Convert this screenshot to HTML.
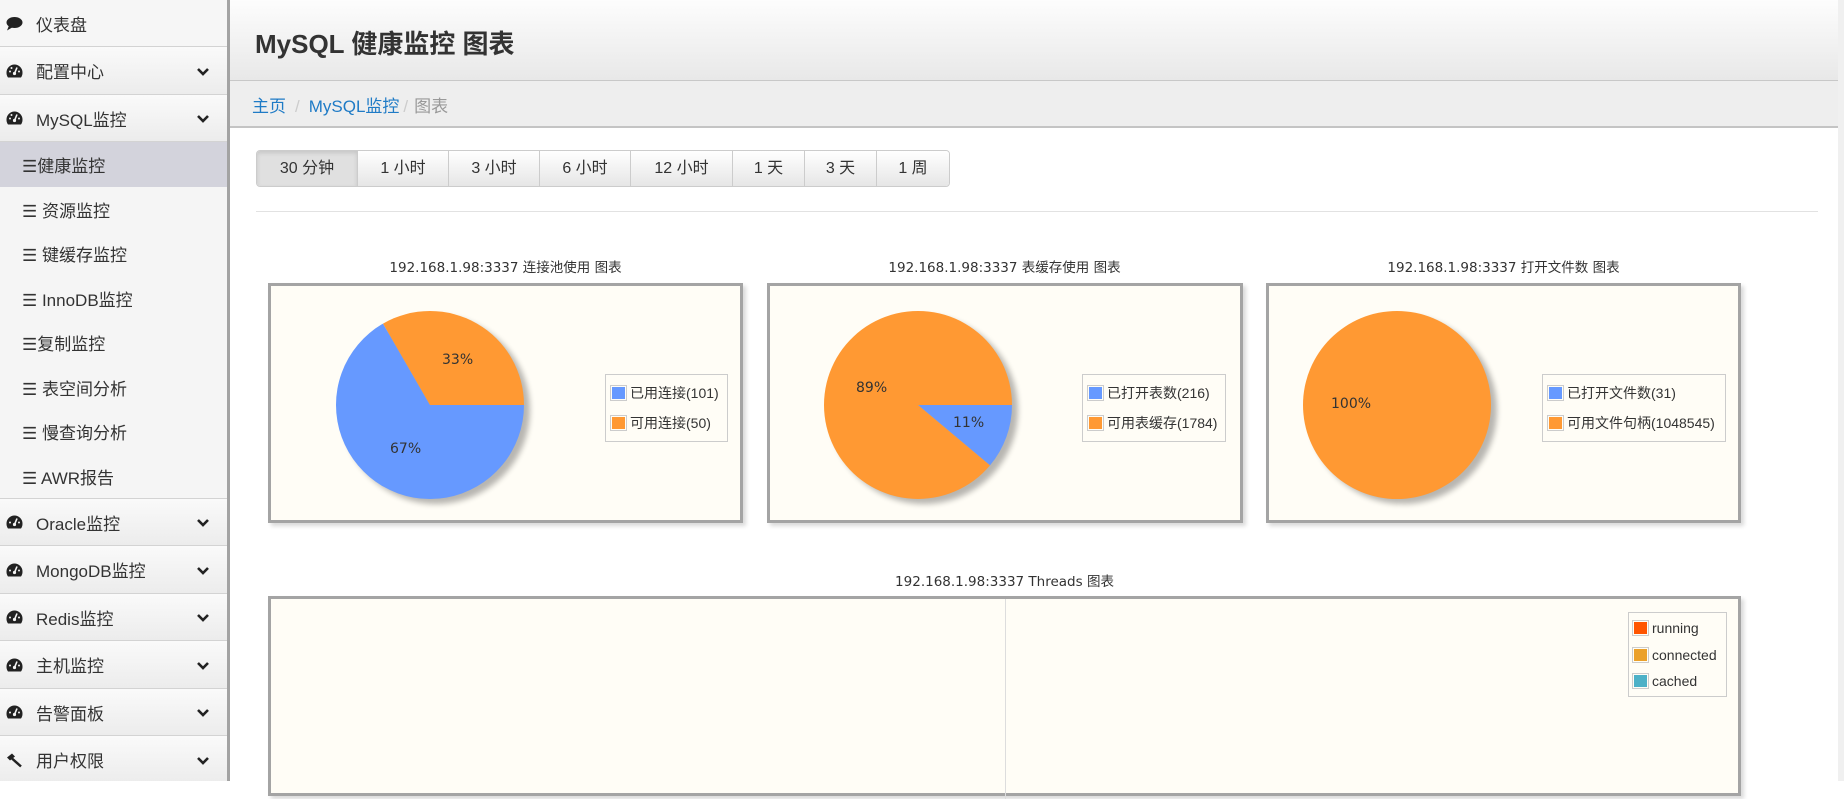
<!DOCTYPE html>
<html><head><meta charset="utf-8"><style>
*{margin:0;padding:0;box-sizing:border-box}
body{width:1844px;height:781px;overflow:hidden;background:#fff;font-family:"Liberation Sans","Noto Sans CJK SC",sans-serif;color:#333;position:relative}
#sb{position:absolute;left:0;top:0;width:230px;height:781px;background:#f5f5f5;border-right:3px solid #a3a3a3;overflow:hidden}
.it{position:absolute;left:0;width:227px;font-size:17px;color:#333;display:flex;align-items:center}
.top{background:linear-gradient(#fafafa,#ececec);border-bottom:1px solid #d3d3d3}
.top .ic{position:absolute;left:6px;top:50%;transform:translateY(-50%);height:15px}
.top .tx{position:absolute;left:36px}
.top .ch{position:absolute;left:196px;top:50%;margin-top:-7px;height:14px}
.sub .tx{position:absolute;left:22px}
.sub.act{background:#d3d3dc}
#hd{position:absolute;left:230px;top:0;width:1614px;height:81px;background:linear-gradient(#fdfdfd,#e8e8e8);border-bottom:1px solid #c8c8c8}
#hd h1{position:absolute;left:25px;top:24px;font-size:26px;font-weight:bold;color:#333}
#bc{position:absolute;left:230px;top:81px;width:1614px;height:47px;background:#eee;border-bottom:2px solid #c4c4c4;font-size:17px;padding:11px 0 0 22px}
#bc a{color:#1f7bc6}#bc .s{color:#ccc;margin:0 9px}#bc .c{color:#999}
#bg{position:absolute;left:256px;top:150px;height:37px;display:flex;border:1px solid #ccc;border-radius:4px;overflow:hidden}
#bg div{height:35px;line-height:35px;text-align:center;font-size:16px;color:#333;background:linear-gradient(#fff,#e6e6e6);border-left:1px solid #ccc}
#bg div:first-child{border-left:0;background:#e0e0e0;box-shadow:inset 0 2px 4px rgba(0,0,0,.12)}
#hr{position:absolute;left:256px;top:211px;width:1562px;border-top:1px solid #e2e2e2}
.ct{position:absolute;font-size:14px;color:#333;text-align:center;width:475px;font-family:"DejaVu Sans","Noto Sans CJK SC",sans-serif;font-size:13.5px}
.box{position:absolute;background:#fffdf6;border:3px solid #a4a4a4;box-shadow:3px 3px 4px rgba(0,0,0,.15)}
.lg{position:absolute;border:1px solid #ccc;background:#fffdf6;font-size:14px;color:#333;padding:3px 4px}
.lg div{display:flex;align-items:center;height:30px;white-space:nowrap}
.sw{width:17px;height:16px;border:1px solid #ccc;padding:1px;margin-right:3px}
.sw i{display:block;width:100%;height:100%}
#rs{position:absolute;right:0;top:0;width:6px;height:781px;background:#f0f0f0}
</style></head><body>
<div id="sb">
<div class="it top" style="top:0;height:47px;background:#f6f6f6"><span class="ic"><svg width="17" height="14" viewBox="0 0 17 14"><ellipse cx="8.5" cy="6" rx="8" ry="5.5" fill="#222"/><path d="M3 9 L1 14 L7 10.5Z" fill="#222"/></svg></span><span class="tx">仪表盘</span></div>
<div class="it top" style="top:47px;height:48px"><span class="ic"><svg width="17" height="15" viewBox="0 0 17 15"><path d="M8.5 1A8 8 0 0 0 0.5 9 8 8 0 0 0 2 14h13a8 8 0 0 0 1.5-5A8 8 0 0 0 8.5 1z" fill="#222"/><circle cx="8.5" cy="10" r="1.6" fill="#f5f5f5"/><path d="M8.5 10L11 4" stroke="#f5f5f5" stroke-width="1.6"/><circle cx="4" cy="8" r="1" fill="#f5f5f5"/><circle cx="5.5" cy="4.5" r="1" fill="#f5f5f5"/><circle cx="13" cy="8" r="1" fill="#f5f5f5"/></svg></span><span class="tx">配置中心</span><span class="ch"><svg width="14" height="14"><path d="M2 4l5 5 5-5" stroke="#222" stroke-width="2.6" fill="none"/></svg></span></div>
<div class="it top" style="top:95px;height:47px"><span class="ic"><svg width="17" height="15" viewBox="0 0 17 15"><path d="M8.5 1A8 8 0 0 0 0.5 9 8 8 0 0 0 2 14h13a8 8 0 0 0 1.5-5A8 8 0 0 0 8.5 1z" fill="#222"/><circle cx="8.5" cy="10" r="1.6" fill="#f5f5f5"/><path d="M8.5 10L11 4" stroke="#f5f5f5" stroke-width="1.6"/><circle cx="4" cy="8" r="1" fill="#f5f5f5"/><circle cx="5.5" cy="4.5" r="1" fill="#f5f5f5"/><circle cx="13" cy="8" r="1" fill="#f5f5f5"/></svg></span><span class="tx">MySQL监控</span><span class="ch"><svg width="14" height="14"><path d="M2 4l5 5 5-5" stroke="#222" stroke-width="2.6" fill="none"/></svg></span></div>
<div class="it sub act" style="top:142px;height:45px"><span class="tx">☰健康监控</span></div>
<div class="it sub" style="top:187px;height:44px"><span class="tx">☰ 资源监控</span></div>
<div class="it sub" style="top:231px;height:45px"><span class="tx">☰ 键缓存监控</span></div>
<div class="it sub" style="top:276px;height:44px"><span class="tx">☰ InnoDB监控</span></div>
<div class="it sub" style="top:320px;height:45px"><span class="tx">☰复制监控</span></div>
<div class="it sub" style="top:365px;height:44px"><span class="tx">☰ 表空间分析</span></div>
<div class="it sub" style="top:409px;height:45px"><span class="tx">☰ 慢查询分析</span></div>
<div class="it sub" style="top:454px;height:45px;border-bottom:1px solid #d3d3d3"><span class="tx">☰ AWR报告</span></div>
<div class="it top" style="top:499px;height:47px"><span class="ic"><svg width="17" height="15" viewBox="0 0 17 15"><path d="M8.5 1A8 8 0 0 0 0.5 9 8 8 0 0 0 2 14h13a8 8 0 0 0 1.5-5A8 8 0 0 0 8.5 1z" fill="#222"/><circle cx="8.5" cy="10" r="1.6" fill="#f5f5f5"/><path d="M8.5 10L11 4" stroke="#f5f5f5" stroke-width="1.6"/><circle cx="4" cy="8" r="1" fill="#f5f5f5"/><circle cx="13" cy="8" r="1" fill="#f5f5f5"/></svg></span><span class="tx">Oracle监控</span><span class="ch"><svg width="14" height="14"><path d="M2 4l5 5 5-5" stroke="#222" stroke-width="2.6" fill="none"/></svg></span></div>
<div class="it top" style="top:546px;height:48px"><span class="ic"><svg width="17" height="15" viewBox="0 0 17 15"><path d="M8.5 1A8 8 0 0 0 0.5 9 8 8 0 0 0 2 14h13a8 8 0 0 0 1.5-5A8 8 0 0 0 8.5 1z" fill="#222"/><circle cx="8.5" cy="10" r="1.6" fill="#f5f5f5"/><path d="M8.5 10L11 4" stroke="#f5f5f5" stroke-width="1.6"/><circle cx="4" cy="8" r="1" fill="#f5f5f5"/><circle cx="13" cy="8" r="1" fill="#f5f5f5"/></svg></span><span class="tx">MongoDB监控</span><span class="ch"><svg width="14" height="14"><path d="M2 4l5 5 5-5" stroke="#222" stroke-width="2.6" fill="none"/></svg></span></div>
<div class="it top" style="top:594px;height:47px"><span class="ic"><svg width="17" height="15" viewBox="0 0 17 15"><path d="M8.5 1A8 8 0 0 0 0.5 9 8 8 0 0 0 2 14h13a8 8 0 0 0 1.5-5A8 8 0 0 0 8.5 1z" fill="#222"/><circle cx="8.5" cy="10" r="1.6" fill="#f5f5f5"/><path d="M8.5 10L11 4" stroke="#f5f5f5" stroke-width="1.6"/><circle cx="4" cy="8" r="1" fill="#f5f5f5"/><circle cx="13" cy="8" r="1" fill="#f5f5f5"/></svg></span><span class="tx">Redis监控</span><span class="ch"><svg width="14" height="14"><path d="M2 4l5 5 5-5" stroke="#222" stroke-width="2.6" fill="none"/></svg></span></div>
<div class="it top" style="top:641px;height:48px"><span class="ic"><svg width="17" height="15" viewBox="0 0 17 15"><path d="M8.5 1A8 8 0 0 0 0.5 9 8 8 0 0 0 2 14h13a8 8 0 0 0 1.5-5A8 8 0 0 0 8.5 1z" fill="#222"/><circle cx="8.5" cy="10" r="1.6" fill="#f5f5f5"/><path d="M8.5 10L11 4" stroke="#f5f5f5" stroke-width="1.6"/><circle cx="4" cy="8" r="1" fill="#f5f5f5"/><circle cx="13" cy="8" r="1" fill="#f5f5f5"/></svg></span><span class="tx">主机监控</span><span class="ch"><svg width="14" height="14"><path d="M2 4l5 5 5-5" stroke="#222" stroke-width="2.6" fill="none"/></svg></span></div>
<div class="it top" style="top:689px;height:47px"><span class="ic"><svg width="17" height="15" viewBox="0 0 17 15"><path d="M8.5 1A8 8 0 0 0 0.5 9 8 8 0 0 0 2 14h13a8 8 0 0 0 1.5-5A8 8 0 0 0 8.5 1z" fill="#222"/><circle cx="8.5" cy="10" r="1.6" fill="#f5f5f5"/><path d="M8.5 10L11 4" stroke="#f5f5f5" stroke-width="1.6"/><circle cx="4" cy="8" r="1" fill="#f5f5f5"/><circle cx="13" cy="8" r="1" fill="#f5f5f5"/></svg></span><span class="tx">告警面板</span><span class="ch"><svg width="14" height="14"><path d="M2 4l5 5 5-5" stroke="#222" stroke-width="2.6" fill="none"/></svg></span></div>
<div class="it top" style="top:736px;height:48px"><span class="ic"><svg width="17" height="15" viewBox="0 0 17 15"><path d="M1 5l5-4 3 3-5 4z" fill="#222"/><path d="M6 6l9 8" stroke="#222" stroke-width="2.5"/></svg></span><span class="tx">用户权限</span><span class="ch"><svg width="14" height="14"><path d="M2 4l5 5 5-5" stroke="#222" stroke-width="2.6" fill="none"/></svg></span></div>
</div>
<div id="hd"><h1>MySQL 健康监控 图表</h1></div>
<div id="bc"><a>主页</a><span class="s">/</span><a>MySQL监控</a><span class="s" style="margin:0 6px 0 4px">/</span><span class="c">图表</span></div>
<div id="bg"><div style="width:100px">30 分钟</div><div style="width:91px">1 小时</div><div style="width:91px">3 小时</div><div style="width:91px">6 小时</div><div style="width:102px">12 小时</div><div style="width:72px">1 天</div><div style="width:72px">3 天</div><div style="width:73px">1 周</div></div>
<div id="hr"></div>

<div class="ct" style="left:268px;top:256px">192.168.1.98:3337 连接池使用 图表</div>
<div class="ct" style="left:767px;top:256px">192.168.1.98:3337 表缓存使用 图表</div>
<div class="ct" style="left:1266px;top:256px">192.168.1.98:3337 打开文件数 图表</div>
<div class="ct" style="left:268px;top:570px;width:1473px">192.168.1.98:3337 Threads 图表</div>

<div class="box" style="left:268px;top:283px;width:475px;height:240px">
<svg width="469" height="234" style="position:absolute;left:0;top:0"><defs><filter id="f"><feGaussianBlur stdDeviation="3"/></filter></defs>
<circle cx="165" cy="124" r="94" fill="#000" opacity=".28" filter="url(#f)"/>
<path d="M159 119 L253 119 A94 94 0 1 1 112 37.6Z" fill="#6699ff"/>
<path d="M159 119 L112 37.6 A94 94 0 0 1 253 119Z" fill="#ff9933"/>
<text x="171" y="78" font-size="14" fill="#333" font-family="DejaVu Sans">33%</text>
<text x="119" y="167" font-size="14" fill="#333" font-family="DejaVu Sans">67%</text></svg>
<div class="lg" style="left:334px;top:88px;width:123px"><div><span class="sw"><i style="background:#6699ff"></i></span>已用连接(101)</div><div><span class="sw"><i style="background:#ff9933"></i></span>可用连接(50)</div></div>
</div>

<div class="box" style="left:767px;top:283px;width:476px;height:240px">
<svg width="470" height="234" style="position:absolute;left:0;top:0">
<circle cx="154" cy="124" r="94" fill="#000" opacity=".28" filter="url(#f)"/>
<path d="M148 119 L242 119 A94 94 0 0 1 220 179.4Z" fill="#6699ff"/>
<path d="M148 119 L220 179.4 A94 94 0 1 1 242 119Z" fill="#ff9933"/>
<text x="86" y="106" font-size="14" fill="#333" font-family="DejaVu Sans">89%</text>
<text x="183" y="141" font-size="14" fill="#333" font-family="DejaVu Sans">11%</text></svg>
<div class="lg" style="left:312px;top:88px;width:144px"><div><span class="sw"><i style="background:#6699ff"></i></span>已打开表数(216)</div><div><span class="sw"><i style="background:#ff9933"></i></span>可用表缓存(1784)</div></div>
</div>

<div class="box" style="left:1266px;top:283px;width:475px;height:240px">
<svg width="469" height="234" style="position:absolute;left:0;top:0">
<circle cx="134" cy="124" r="94" fill="#000" opacity=".28" filter="url(#f)"/>
<circle cx="128" cy="119" r="94" fill="#ff9933"/>
<text x="62" y="122" font-size="14" fill="#333" font-family="DejaVu Sans">100%</text></svg>
<div class="lg" style="left:273px;top:88px;width:184px"><div><span class="sw"><i style="background:#6699ff"></i></span>已打开文件数(31)</div><div><span class="sw"><i style="background:#ff9933"></i></span>可用文件句柄(1048545)</div></div>
</div>

<div class="box" style="left:268px;top:596px;width:1473px;height:200px">
<div style="position:absolute;left:734px;top:0;width:1px;height:200px;background:#ddd"></div>
<div class="lg" style="left:1357px;top:13px;width:99px;padding:2px 3px"><div style="height:26px"><span class="sw"><i style="background:#ff5500"></i></span>running</div><div style="height:27px"><span class="sw"><i style="background:#eba12b"></i></span>connected</div><div style="height:26px"><span class="sw"><i style="background:#4db1c7"></i></span>cached</div></div>
</div>
<div id="rs"></div>
</body></html>
